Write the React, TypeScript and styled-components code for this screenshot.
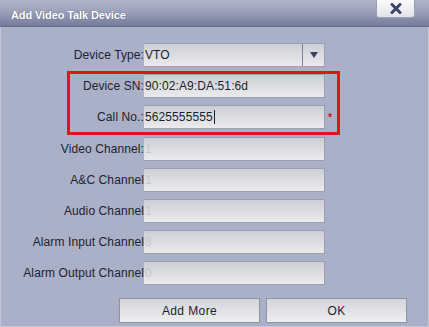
import React from 'react'
import styled, { createGlobalStyle } from 'styled-components'

const Global = createGlobalStyle`
  html, body {
    margin: 0;
    padding: 0;
    background: #aab0c8;
  }
  * {
    box-sizing: border-box;
  }
`

const Dialog = styled.div`
  width: 429px;
  height: 327px;
  background: #aab0c8;
  border: 1px solid #c3c7d6;
  border-top: none;
  display: flex;
  flex-direction: column;
  font-family: 'Liberation Sans', Arial, sans-serif;
  font-size: 12px;
  color: #1c1f2a;
`

const TitleBar = styled.div`
  height: 27px;
  margin: 0 -1px;
  display: flex;
  align-items: flex-start;
  justify-content: space-between;
  padding: 0 14px 0 11px;
  background: linear-gradient(#b1b5ca, #9ca1bb 45%, #747a98);
  border-bottom: 1px solid #676d8a;
`

const Title = styled.div`
  margin-top: 9px;
  color: #fff;
  font-weight: bold;
  font-size: 11px;
  letter-spacing: -0.1px;
  text-shadow: 0 0 1px #4a5070;
`

const CloseBtn = styled.button`
  width: 39px;
  height: 18px;
  padding: 0;
  margin: 0;
  border: 1px solid #9ca0b4;
  border-top: none;
  border-radius: 0 0 3px 3px;
  background: linear-gradient(#fbfbfc, #e2e3e8);
  display: flex;
  align-items: center;
  justify-content: center;
`

const Form = styled.div`
  display: flex;
  flex-direction: column;
  gap: 7px;
  padding-top: 16px;
`

const Highlight = styled.div`
  margin: -3px 0 -5px 66px;
  width: 273px;
  border: 3px solid #e5121a;
  padding-bottom: 3px;
  display: flex;
  flex-direction: column;
  gap: 7px;
`

const Row = styled.div<{ $labelWidth: number }>`
  display: grid;
  grid-template-columns: ${({ $labelWidth }) => $labelWidth}px 181px 14px;
  align-items: center;
  height: 24px;
`

const Label = styled.div`
  text-align: right;
  white-space: nowrap;
  letter-spacing: 0.1px;
  color: #20232e;
`

const Field = styled.div<{ $muted?: boolean }>`
  height: 24px;
  display: flex;
  align-items: center;
  padding-left: 1px;
  border: 1px solid #9b9fb2;
  border-left: none;
  background: linear-gradient(#cdcfd6, #ebebec);
  color: ${({ $muted }) => ($muted ? '#c4c6cc' : '#1c1f2a')};
  white-space: nowrap;
  letter-spacing: 0.1px;
`

const SelectBox = styled(Field)`
  justify-content: space-between;
  padding-right: 0;
`

const ArrowPart = styled.div`
  width: 22px;
  height: 100%;
  border-left: 1px solid #7d8194;
  display: flex;
  align-items: center;
  justify-content: center;
`

const Caret = styled.span`
  display: inline-block;
  width: 1px;
  height: 14px;
  margin-left: 1px;
  background: #1c1f2a;
`

const Required = styled.span`
  color: #d11a1a;
  font-size: 11px;
  padding-left: 3px;
  font-weight: bold;
`

const Buttons = styled.div`
  display: flex;
  gap: 6px;
  margin: 13px 0 0 118px;
`

const Button = styled.button`
  width: 141px;
  height: 25px;
  border: 1px solid #8f93a8;
  background: linear-gradient(#d3d5dc, #eeeeef);
  font-family: 'Liberation Sans', Arial, sans-serif;
  font-size: 12px;
  letter-spacing: 0.4px;
  color: #1c1f2a;
  padding: 0;
`

const channels = [
  { label: 'Video Channel:', value: '1' },
  { label: 'A&C Channel', value: '1' },
  { label: 'Audio Channel', value: '1' },
  { label: 'Alarm Input Channel', value: '8' },
  { label: 'Alarm Output Channel', value: '0' },
]

export default function App() {
  return (
    <>
      <Global />
      <Dialog>
        <TitleBar>
          <Title>Add Video Talk Device</Title>
          <CloseBtn type="button">
            <svg width="12" height="11" viewBox="0 0 12 11">
              <path d="M2 1.5 L10 9.5 M10 1.5 L2 9.5" stroke="#3e4566" strokeWidth="3" strokeLinecap="round" />
            </svg>
          </CloseBtn>
        </TitleBar>
        <Form>
          <Row $labelWidth={143}>
            <Label>Device Type:</Label>
            <SelectBox>
              <span>VTO</span>
              <ArrowPart>
                <svg width="8" height="6" viewBox="0 0 8 6">
                  <path d="M0 0 H8 L4 6 Z" fill="#3b4266" />
                </svg>
              </ArrowPart>
            </SelectBox>
          </Row>
          <Highlight>
            <Row $labelWidth={74}>
              <Label>Device SN:</Label>
              <Field>90:02:A9:DA:51:6d</Field>
            </Row>
            <Row $labelWidth={74}>
              <Label>Call No.:</Label>
              <Field>
                5625555555
                <Caret />
              </Field>
              <Required>*</Required>
            </Row>
          </Highlight>
          {channels.map((c) => (
            <Row key={c.label} $labelWidth={143}>
              <Label>{c.label}</Label>
              <Field $muted>{c.value}</Field>
            </Row>
          ))}
        </Form>
        <Buttons>
          <Button type="button">Add More</Button>
          <Button type="button">OK</Button>
        </Buttons>
      </Dialog>
    </>
  )
}
